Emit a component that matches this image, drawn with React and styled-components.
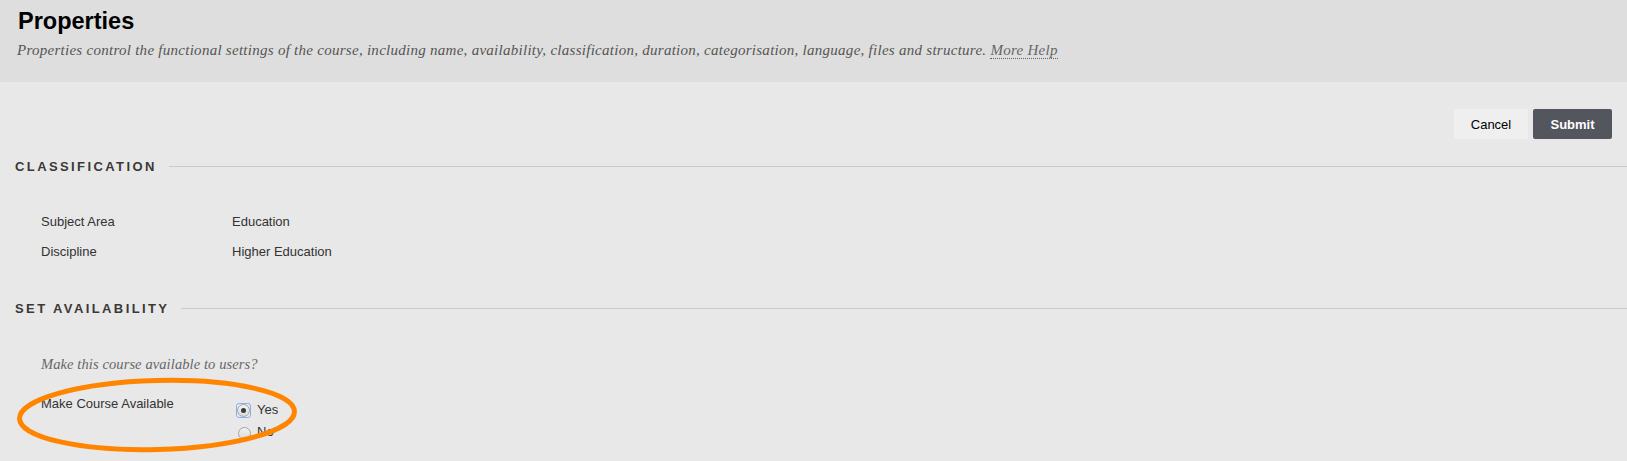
import styled, { createGlobalStyle } from 'styled-components';

const GlobalStyle = createGlobalStyle`
    html, body {
        margin: 0;
        padding: 0;
        background-color: #e8e8e8;
        font-family: "Liberation Sans", Arial, sans-serif;
    }
`

const Page = styled.div`
    position: relative;
    min-height: 461px;
    overflow: hidden;
`

const PageHeader = styled.header`
    height: 82px;
    box-sizing: border-box;
    padding: 8px 18px 0 18px;
    background-color: #dedede;
`

const Title = styled.h1`
    margin: 0;
    font-size: 23.5px;
    line-height: 26px;
    font-weight: bold;
    color: #000;
`

const Description = styled.p`
    margin: 6px 0 0 -1px;
    font-family: "Liberation Serif", "Times New Roman", serif;
    font-style: italic;
    font-size: 15px;
    letter-spacing: 0.27px;
    line-height: 20px;
    color: #555;
`

const HelpLink = styled.a`
    color: #666;
    text-decoration: none;
    border-bottom: 1px dotted #666;
`

const Content = styled.main`
    padding-top: 27px;
`

const ButtonBar = styled.div`
    display: flex;
    justify-content: flex-end;
    gap: 5px;
    padding-right: 15px;
`

const Button = styled.button`
    height: 30px;
    width: ${p => p.$primary ? '79px' : '74px'};
    padding: 0;
    border: none;
    border-radius: 2px;
    font-family: "Liberation Sans", Arial, sans-serif;
    font-size: 13px;
    font-weight: ${p => p.$primary ? 'bold' : 'normal'};
    color: ${p => p.$primary ? '#fff' : '#000'};
    background-color: ${p => p.$primary ? '#54565e' : '#efefef'};
`

const Section = styled.section`
    margin-top: ${p => p.$top}px;
`

const SectionHeading = styled.h2`
    display: flex;
    align-items: center;
    gap: 12px;
    margin: 0;
    padding-left: 15px;
    height: 16px;
    font-size: 13px;
    line-height: 16px;
    font-weight: bold;
    letter-spacing: 2.4px;
    color: #3b3836;

    &::after {
        content: '';
        flex: 1;
        height: 1px;
        margin-top: -1px;
        background-color: #c9c9c9;
    }
`

const FieldList = styled.div`
    padding: ${p => p.$top}px 0 0 41px;
`

const FieldRow = styled.div`
    display: grid;
    grid-template-columns: 191px 1fr;
    align-items: start;
    font-size: 13px;
    line-height: ${p => p.$line || 30}px;
    color: #333;
`

const Instructions = styled.p`
    margin: 0 0 20px 0;
    font-family: "Liberation Serif", "Times New Roman", serif;
    font-style: italic;
    font-size: 14.5px;
    letter-spacing: 0.1px;
    line-height: 20px;
    color: #666;
`

const RadioList = styled.ul`
    list-style: none;
    margin: 5px 0 0 0;
    padding: 0;
`

const RadioOption = styled.li`
    display: flex;
    align-items: center;
    height: 22px;
    line-height: 22px;
`

const Radio = styled.span`
    position: relative;
    display: inline-block;
    box-sizing: border-box;
    width: 13px;
    height: 13px;
    margin: 3px 6px 0 6px;
    border-radius: 50%;
    border: 1px solid #a4a4a4;
    background: linear-gradient(#f4f4f4, #d8d8d8);

    ${p => p.$checked && `
        &::after {
            content: '';
            position: absolute;
            left: 3px;
            top: 3px;
            width: 5px;
            height: 5px;
            border-radius: 50%;
            background-color: #3a3a3a;
        }
    `}
`

const FocusBox = styled.span`
    display: inline-flex;
    margin: 0 0 0 4px;
    padding: 0;
    border: 1px solid #8aaee6;
    border-radius: 3px;
    background-color: #e4ecf8;

    & > span {
        margin: 0;
    }
`

const OptionText = styled.span`
    margin-left: ${p => p.$tight ? 6 : 0}px;
`

const Annotation = styled.svg`
    position: absolute;
    left: 16px;
    top: 377px;
    pointer-events: none;
`

const App = () => {
    return (
        <Page>
            <GlobalStyle />
            <PageHeader>
                <Title>Properties</Title>
                <Description>
                    Properties control the functional settings of the course, including name, availability, classification, duration, categorisation, language, files and structure. <HelpLink href='#'>More Help</HelpLink>
                </Description>
            </PageHeader>
            <Content>
                <ButtonBar>
                    <Button>Cancel</Button>
                    <Button $primary>Submit</Button>
                </ButtonBar>

                <Section $top={20}>
                    <SectionHeading>CLASSIFICATION</SectionHeading>
                    <FieldList $top={32}>
                        <FieldRow>
                            <span>Subject Area</span>
                            <span>Education</span>
                        </FieldRow>
                        <FieldRow>
                            <span>Discipline</span>
                            <span>Higher Education</span>
                        </FieldRow>
                    </FieldList>
                </Section>

                <Section $top={34}>
                    <SectionHeading>SET AVAILABILITY</SectionHeading>
                    <FieldList $top={37}>
                        <Instructions>Make this course available to users?</Instructions>
                        <FieldRow $line={20}>
                            <span>Make Course Available</span>
                            <RadioList>
                                <RadioOption>
                                    <FocusBox><Radio $checked /></FocusBox>
                                    <OptionText $tight>Yes</OptionText>
                                </RadioOption>
                                <RadioOption>
                                    <Radio />
                                    <OptionText>No</OptionText>
                                </RadioOption>
                            </RadioList>
                        </FieldRow>
                    </FieldList>
                </Section>
            </Content>

            <Annotation width='284' height='78' viewBox='0 0 284 78'>
                <ellipse cx='141' cy='38' rx='137.5' ry='34.5' fill='none' stroke='#ff8500' strokeWidth='5' transform='rotate(-1.5 141 38)' />
            </Annotation>
        </Page>
    );
}

export default App;
